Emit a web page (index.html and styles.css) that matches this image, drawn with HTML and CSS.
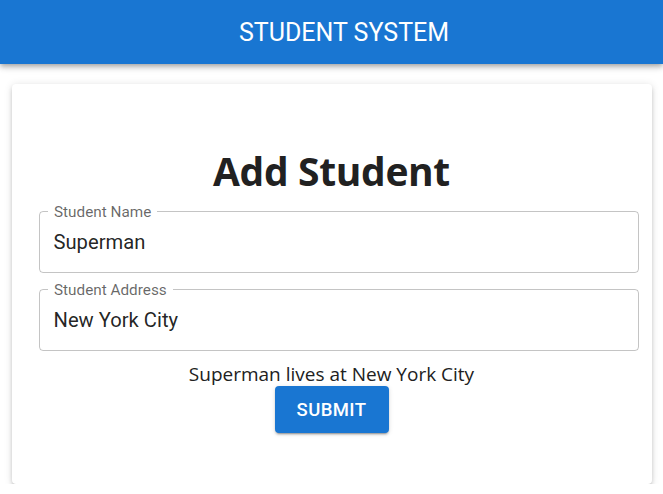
FILE: index.html
```html
<!DOCTYPE html>
<html>
<head>
<meta charset="utf-8">
<link rel="stylesheet" href="styles.css">
</head>
<body>
<header class="appbar">
  <div class="appbar-title">STUDENT SYSTEM</div>
</header>
<main class="container">
  <section class="card">
    <h1 class="heading">Add Student</h1>
    <form class="form">
      <div class="field">
        <span class="field-label">Student Name</span>
        <div class="field-input">Superman</div>
      </div>
      <div class="field">
        <span class="field-label">Student Address</span>
        <div class="field-input">New York City</div>
      </div>
    </form>
    <p class="summary">Superman lives at New York City</p>
    <div class="actions">
      <button class="btn" type="button">SUBMIT</button>
    </div>
  </section>
</main>
</body>
</html>
```
FILE: styles.css
```css
* { box-sizing: border-box; }
html, body { margin: 0; padding: 0; background: #fff; }
body { font-family: "Open Sans", "DejaVu Sans", sans-serif; overflow: hidden; }

.appbar {
  height: 64px;
  background: #1976d2;
  color: #fff;
  display: flex;
  align-items: center;
  justify-content: center;
  padding-left: 25px;
  box-shadow: 0 2px 4px -1px rgba(0,0,0,0.2), 0 4px 5px 0 rgba(0,0,0,0.14), 0 1px 10px 0 rgba(0,0,0,0.12);
  position: relative;
  z-index: 1;
}
.appbar-title {
  font-family: Roboto, "Liberation Sans", sans-serif;
  font-size: 25px;
  font-weight: 400;
  line-height: 1;
  padding-top: 1px;
}

.container {
  display: flex;
  justify-content: center;
  padding-top: 20px;
}
.card {
  width: 640px;
  padding: 50px 20px 51px 20px;
  background: #fff;
  border-radius: 4px;
  box-shadow: 0 3px 3px -2px rgba(0,0,0,0.2), 0 3px 4px 0 rgba(0,0,0,0.14), 0 1px 8px 0 rgba(0,0,0,0.12);
}
.heading {
  margin: 12px 0 7px;
  font-family: "Open Sans", "DejaVu Sans", sans-serif;
  font-weight: 700;
  font-size: 39px;
  line-height: 50px;
  text-align: center;
  color: #212121;
  letter-spacing: -0.35px;
}
.form {
  display: flex;
  flex-direction: column;
}
.field {
  position: relative;
  width: 600px;
  margin: 8px 0 8px 7.5px;
  height: 62px;
  border: 1px solid rgba(0,0,0,0.23);
  border-radius: 4px;
  flex-shrink: 0;
}
.field-label {
  position: absolute;
  left: 8px;
  top: -8px;
  padding: 0 6px;
  background: #fff;
  font-family: Roboto, "Liberation Sans", sans-serif;
  font-size: 15.3px;
  line-height: 16px;
  color: rgba(0,0,0,0.6);
  white-space: nowrap;
}
.field-input {
  padding: 18px 0 0 13.5px;
  font-family: Roboto, "Liberation Sans", sans-serif;
  font-size: 20.2px;
  line-height: 25px;
  color: rgba(0,0,0,0.87);
}
.summary {
  margin: 0;
  padding-top: 3px;
  text-align: center;
  font-size: 19px;
  line-height: 24px;
  color: #212121;
}
.actions {
  display: flex;
  justify-content: center;
}
.btn {
  width: 114px;
  height: 47px;
  border: 0;
  border-radius: 4px;
  background: #1976d2;
  color: #fff;
  font-family: Roboto, "Liberation Sans", sans-serif;
  font-weight: 500;
  font-size: 18.5px;
  letter-spacing: 0.4px;
  box-shadow: 0 3px 1px -2px rgba(0,0,0,0.2), 0 2px 2px 0 rgba(0,0,0,0.14), 0 1px 5px 0 rgba(0,0,0,0.12);
  padding: 0;
}
```
